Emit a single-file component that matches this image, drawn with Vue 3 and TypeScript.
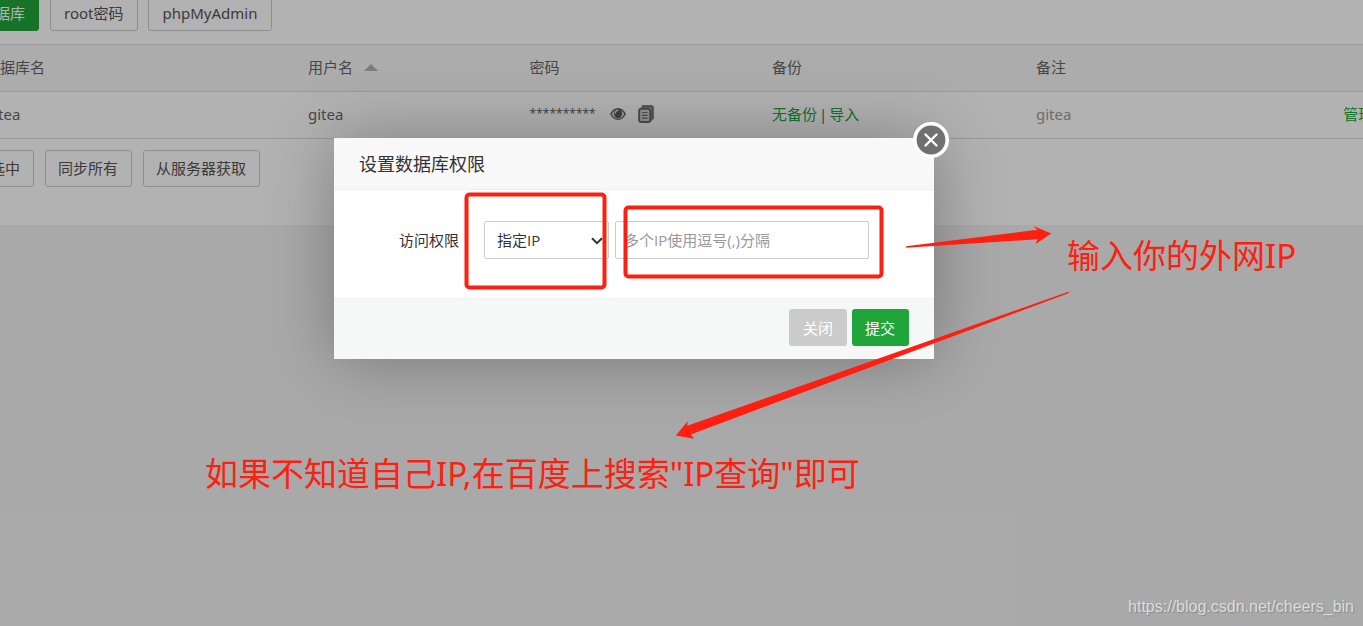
<script setup lang="ts">
import { ref } from 'vue'

interface DatabaseRow {
  id: number
  name: string
  user: string
  note: string
}

const rows: DatabaseRow[] = [{ id: 1, name: 'gitea', user: 'gitea', note: 'gitea' }]
const batchActions = ['删除选中', '同步所有', '从服务器获取']

const dialogOpen = ref(true)
const access = ref('ip')
const addresses = ref('')

function closeDialog() {
  dialogOpen.value = false
}
</script>

<template>
  <div class="page">
    <main class="sheet">
      <div class="toolbar toolbar-top">
        <button type="button" class="btn btn-green">添加数据库</button>
        <button type="button" class="btn">root密码</button>
        <button type="button" class="btn">phpMyAdmin</button>
      </div>

      <table class="grid">
        <colgroup>
          <col class="c-name" />
          <col class="c-user" />
          <col class="c-pass" />
          <col class="c-backup" />
          <col class="c-note" />
          <col />
        </colgroup>
        <thead>
          <tr>
            <th>数据库名</th>
            <th>用户名<span class="sort"></span></th>
            <th>密码</th>
            <th>备份</th>
            <th>备注</th>
            <th></th>
          </tr>
        </thead>
        <tbody>
          <tr v-for="row in rows" :key="row.id">
            <td>{{ row.name }}</td>
            <td>{{ row.user }}</td>
            <td>
              <div class="secret">
                <span class="stars">**********</span>
                <button type="button" class="icon-btn" aria-label="显示密码">
                  <svg width="16" height="14" viewBox="0 0 16 14">
                    <path d="M0 7C2 3.200 4.800 1 8 1s6 2.200 8 6c-2 3.800-4.800 6-8 6S2 10.800 0 7z" fill="#5e5e5e" />
                    <path d="M1.600 7.200C2.500 5.400 3.500 4.100 4.700 3.300 3.600 5.200 3.700 8 5 9.800c.8 1 1.800 1.600 3 1.600s2.200-.6 3-1.600c1.300-1.800 1.400-4.600.3-6.500 1.200.8 2.200 2.100 3.100 3.900-1.700 3-3.900 4.700-6.400 4.700S3.300 10.200 1.600 7.200z" fill="#dedede" />
                    <path d="M7.800 3.200C6.300 3.400 5.400 4.500 5.300 6" fill="none" stroke="#e6e6e6" stroke-width="1.300" stroke-linecap="round" />
                  </svg>
                </button>
                <button type="button" class="icon-btn" aria-label="复制密码">
                  <svg width="16" height="18" viewBox="0 0 16 18">
                    <path d="M4.500.5h9.500a1.500 1.500 0 0 1 1.500 1.500V14l-2.500 2.500V3H3z" fill="#858585" />
                    <path d="M3.500 1.500L4.500.8h9.200a1.500 1.500 0 0 1 1.500 1.500V14" fill="none" stroke="#6a6a6a" stroke-width="1" />
                    <rect x="1.200" y="3.700" width="11" height="13.300" rx="2" fill="#d2d2d2" stroke="#6e6e6e" stroke-width="2" />
                    <path d="M4 7.500h5.500M4 10.300h5.500M4 13.100h5.500" stroke="#6e6e6e" stroke-width="1.200" />
                  </svg>
                </button>
              </div>
            </td>
            <td><a href="#backup">无备份</a><span class="bar">|</span><a href="#import">导入</a></td>
            <td class="note">{{ row.note }}</td>
            <td><a href="#manage">管理</a></td>
          </tr>
        </tbody>
      </table>

      <div class="toolbar toolbar-bottom">
        <button v-for="action in batchActions" :key="action" type="button" class="btn">{{ action }}</button>
      </div>
    </main>

    <div v-if="dialogOpen" class="shade">
      <form class="dialog" role="dialog" aria-labelledby="dialog-title" @submit.prevent="closeDialog">
        <h2 id="dialog-title">设置数据库权限</h2>
        <div class="fields">
          <label class="field-label" for="access">访问权限</label>
          <div class="select-wrap">
            <select id="access" v-model="access">
              <option value="ip">指定IP</option>
            </select>
            <svg class="chevron" width="12" height="8" viewBox="0 0 12 8">
              <path d="M1 1.200l5 5 5-5" fill="none" stroke="#333" stroke-width="2" />
            </svg>
          </div>
          <input v-model="addresses" type="text" aria-label="IP" placeholder="多个IP使用逗号(,)分隔" />
        </div>
        <div class="actions">
          <button type="button" class="act act-grey" @click="closeDialog">关闭</button>
          <button type="submit" class="act act-green">提交</button>
        </div>
        <button type="button" class="close" aria-label="关闭窗口" @click="closeDialog">
          <svg width="36" height="36" viewBox="0 0 36 36">
            <circle cx="18" cy="18" r="16.200" fill="#707070" stroke="#fff" stroke-width="3.600" />
            <path d="M12.500 12.500l11 11M23.500 12.500l-11 11" stroke="#fff" stroke-width="2.400" stroke-linecap="round" />
          </svg>
        </button>
      </form>
    </div>

    <div class="marks">
      <svg width="1363" height="626" viewBox="0 0 1363 626">
        <g fill="none" stroke="#ff1f10" stroke-width="4">
          <rect x="466.500" y="194.500" width="138" height="93" rx="3" />
          <rect x="625.500" y="207.500" width="256" height="69" rx="3" />
        </g>
        <g fill="#ff1f10">
          <path d="M906 246.300L1037.300 229.800 1033.300 226 1051.300 233.400 1035.200 244.200 1037.700 239.300 906.300 247.800z" />
          <path d="M1068.500 291.800L687.300 425.800 687.700 421.200 675.800 435.500 694.200 438.700 690.700 434.400 1069 293z" />
        </g>
      </svg>
      <p class="hand hand-ip">输入你的外网IP</p>
      <p class="hand hand-search">如果不知道自己IP,在百度上搜索"IP查询"即可</p>
    </div>
    <p class="watermark">https://blog.csdn.net/cheers_bin</p>
  </div>
</template>

<style>
body {
  margin: 0;
}
</style>

<style scoped>
.page {
  position: relative;
  min-height: 100vh;
  overflow: hidden;
  background: #f3f3f3;
  color: #666;
  font: 15px/20px "Noto Sans", "Noto Sans CJK SC", sans-serif;
}

.page * {
  box-sizing: border-box;
}

button,
input,
select {
  margin: 0;
  font: inherit;
}

.sheet {
  display: flow-root;
  height: 225px;
  background: #fff;
}

.toolbar {
  display: flex;
}

.toolbar-top {
  gap: 10px;
  margin: -4px 0 13px -64px;
}

.toolbar-bottom {
  gap: 11px;
  margin: 11px 0 0 -53px;
}

.btn {
  height: 37px;
  padding: 0 13px 2px 12px;
  border: 1px solid #ccc;
  border-radius: 3px;
  background: #fff;
  color: #555;
  white-space: nowrap;
}

.toolbar-top .btn {
  height: 35px;
  padding: 0 14px 2px 13px;
}

.toolbar-top .btn-green {
  padding: 0 13px 2px;
  border-color: #20a53a;
  background: #20a53a;
  color: #fff;
}

.btn-green + .btn {
  margin-left: 1px;
}

.grid {
  width: calc(100% + 237px);
  margin-left: -26px;
  border-collapse: collapse;
  table-layout: fixed;
}

.c-name {
  width: 20.25%;
}

.c-user {
  width: 13.85%;
}

.c-pass {
  width: 15.15%;
}

.c-backup {
  width: 16.5%;
}

.c-note {
  width: 19.2%;
}

th,
td {
  height: 47px;
  padding: 0 10px 2px;
  border-top: 1px solid #ddd;
  border-bottom: 1px solid #ddd;
  font-weight: 400;
  text-align: left;
  white-space: nowrap;
}

th:first-child,
td:first-child {
  padding-left: 11px;
}

th {
  background: #f6f6f6;
}

.sort {
  display: inline-block;
  margin-left: 11px;
  border: 7px solid transparent;
  border-top: 0;
  border-bottom-color: #b4b4b4;
  vertical-align: 2px;
}

a {
  color: #20a53a;
  text-decoration: none;
}

.bar {
  margin: 0 2px;
}

.note {
  color: #9c9c9c;
}

.secret {
  display: flex;
  align-items: center;
  gap: 12px;
}

.stars {
  margin-right: 2px;
  font-size: 12px;
}

.icon-btn {
  display: flex;
  padding: 0;
  border: 0;
  background: none;
}

.shade {
  position: absolute;
  inset: 0;
  display: flex;
  justify-content: center;
  align-items: flex-start;
  padding: 138px 95px 0 0;
  background: rgba(0, 0, 0, 0.3);
}

.dialog {
  position: relative;
  width: 600px;
  background: #fff;
  box-shadow: 1px 1px 63px rgba(0, 0, 0, 0.3);
  color: #333;
  font-family: "Open Sans", "Noto Sans CJK SC", sans-serif;
}

.dialog h2 {
  margin: 0;
  padding: 2px 25px 0;
  border-bottom: 1px solid #eee;
  background: #f8f8f8;
  font-size: 18px;
  font-weight: 400;
  line-height: 49px;
}

.fields {
  display: flex;
  align-items: center;
  padding: 31px 65px 39px 0;
}

.field-label {
  width: 125px;
  margin-right: 25px;
  text-align: right;
}

.select-wrap {
  position: relative;
  width: 125px;
  margin-right: 6px;
}

select,
input {
  width: 100%;
  height: 38px;
  border: 1px solid #ccc;
  border-radius: 2px;
  background: #fff;
  color: #333;
}

select {
  display: block;
  padding: 0 24px 0 12px;
  appearance: none;
}

input {
  flex: 1;
  min-width: 0;
  padding: 0 8px;
}

input::placeholder {
  color: #999;
}

.chevron {
  position: absolute;
  top: 16px;
  right: 6px;
  pointer-events: none;
}

.actions {
  display: flex;
  justify-content: flex-end;
  gap: 5px;
  padding: 10px 25px 13px;
  border-top: 1px solid #edf1f2;
  background: #f6f8f8;
}

.act {
  height: 37px;
  padding: 0 14px;
  border: 0;
  border-radius: 3px;
  color: #fff;
}

.act-grey {
  background: #cbcbcb;
}

.act-green {
  padding: 0 14px 0 13px;
  background: #20a53a;
}

.close {
  position: absolute;
  top: -16px;
  right: -15px;
  display: flex;
  padding: 0;
  border: 0;
  border-radius: 50%;
  background: none;
}

.marks {
  position: absolute;
  inset: 0;
  pointer-events: none;
}

.marks svg {
  display: block;
}

.hand {
  position: absolute;
  margin: 0;
  color: #ff1f10;
  font: 33px/44px "Noto Sans", "Noto Sans CJK SC", sans-serif;
  white-space: nowrap;
}

.hand-ip {
  top: 234px;
  left: 1067px;
}

.hand-search {
  top: 452px;
  left: 205px;
}

.watermark {
  position: absolute;
  right: 9px;
  bottom: 9px;
  margin: 0;
  color: #dcdcdc;
  font: 16px/20px "Liberation Sans", Arial, sans-serif;
  text-shadow: 1px 1px 1px rgba(0, 0, 0, 0.2);
}
</style>
